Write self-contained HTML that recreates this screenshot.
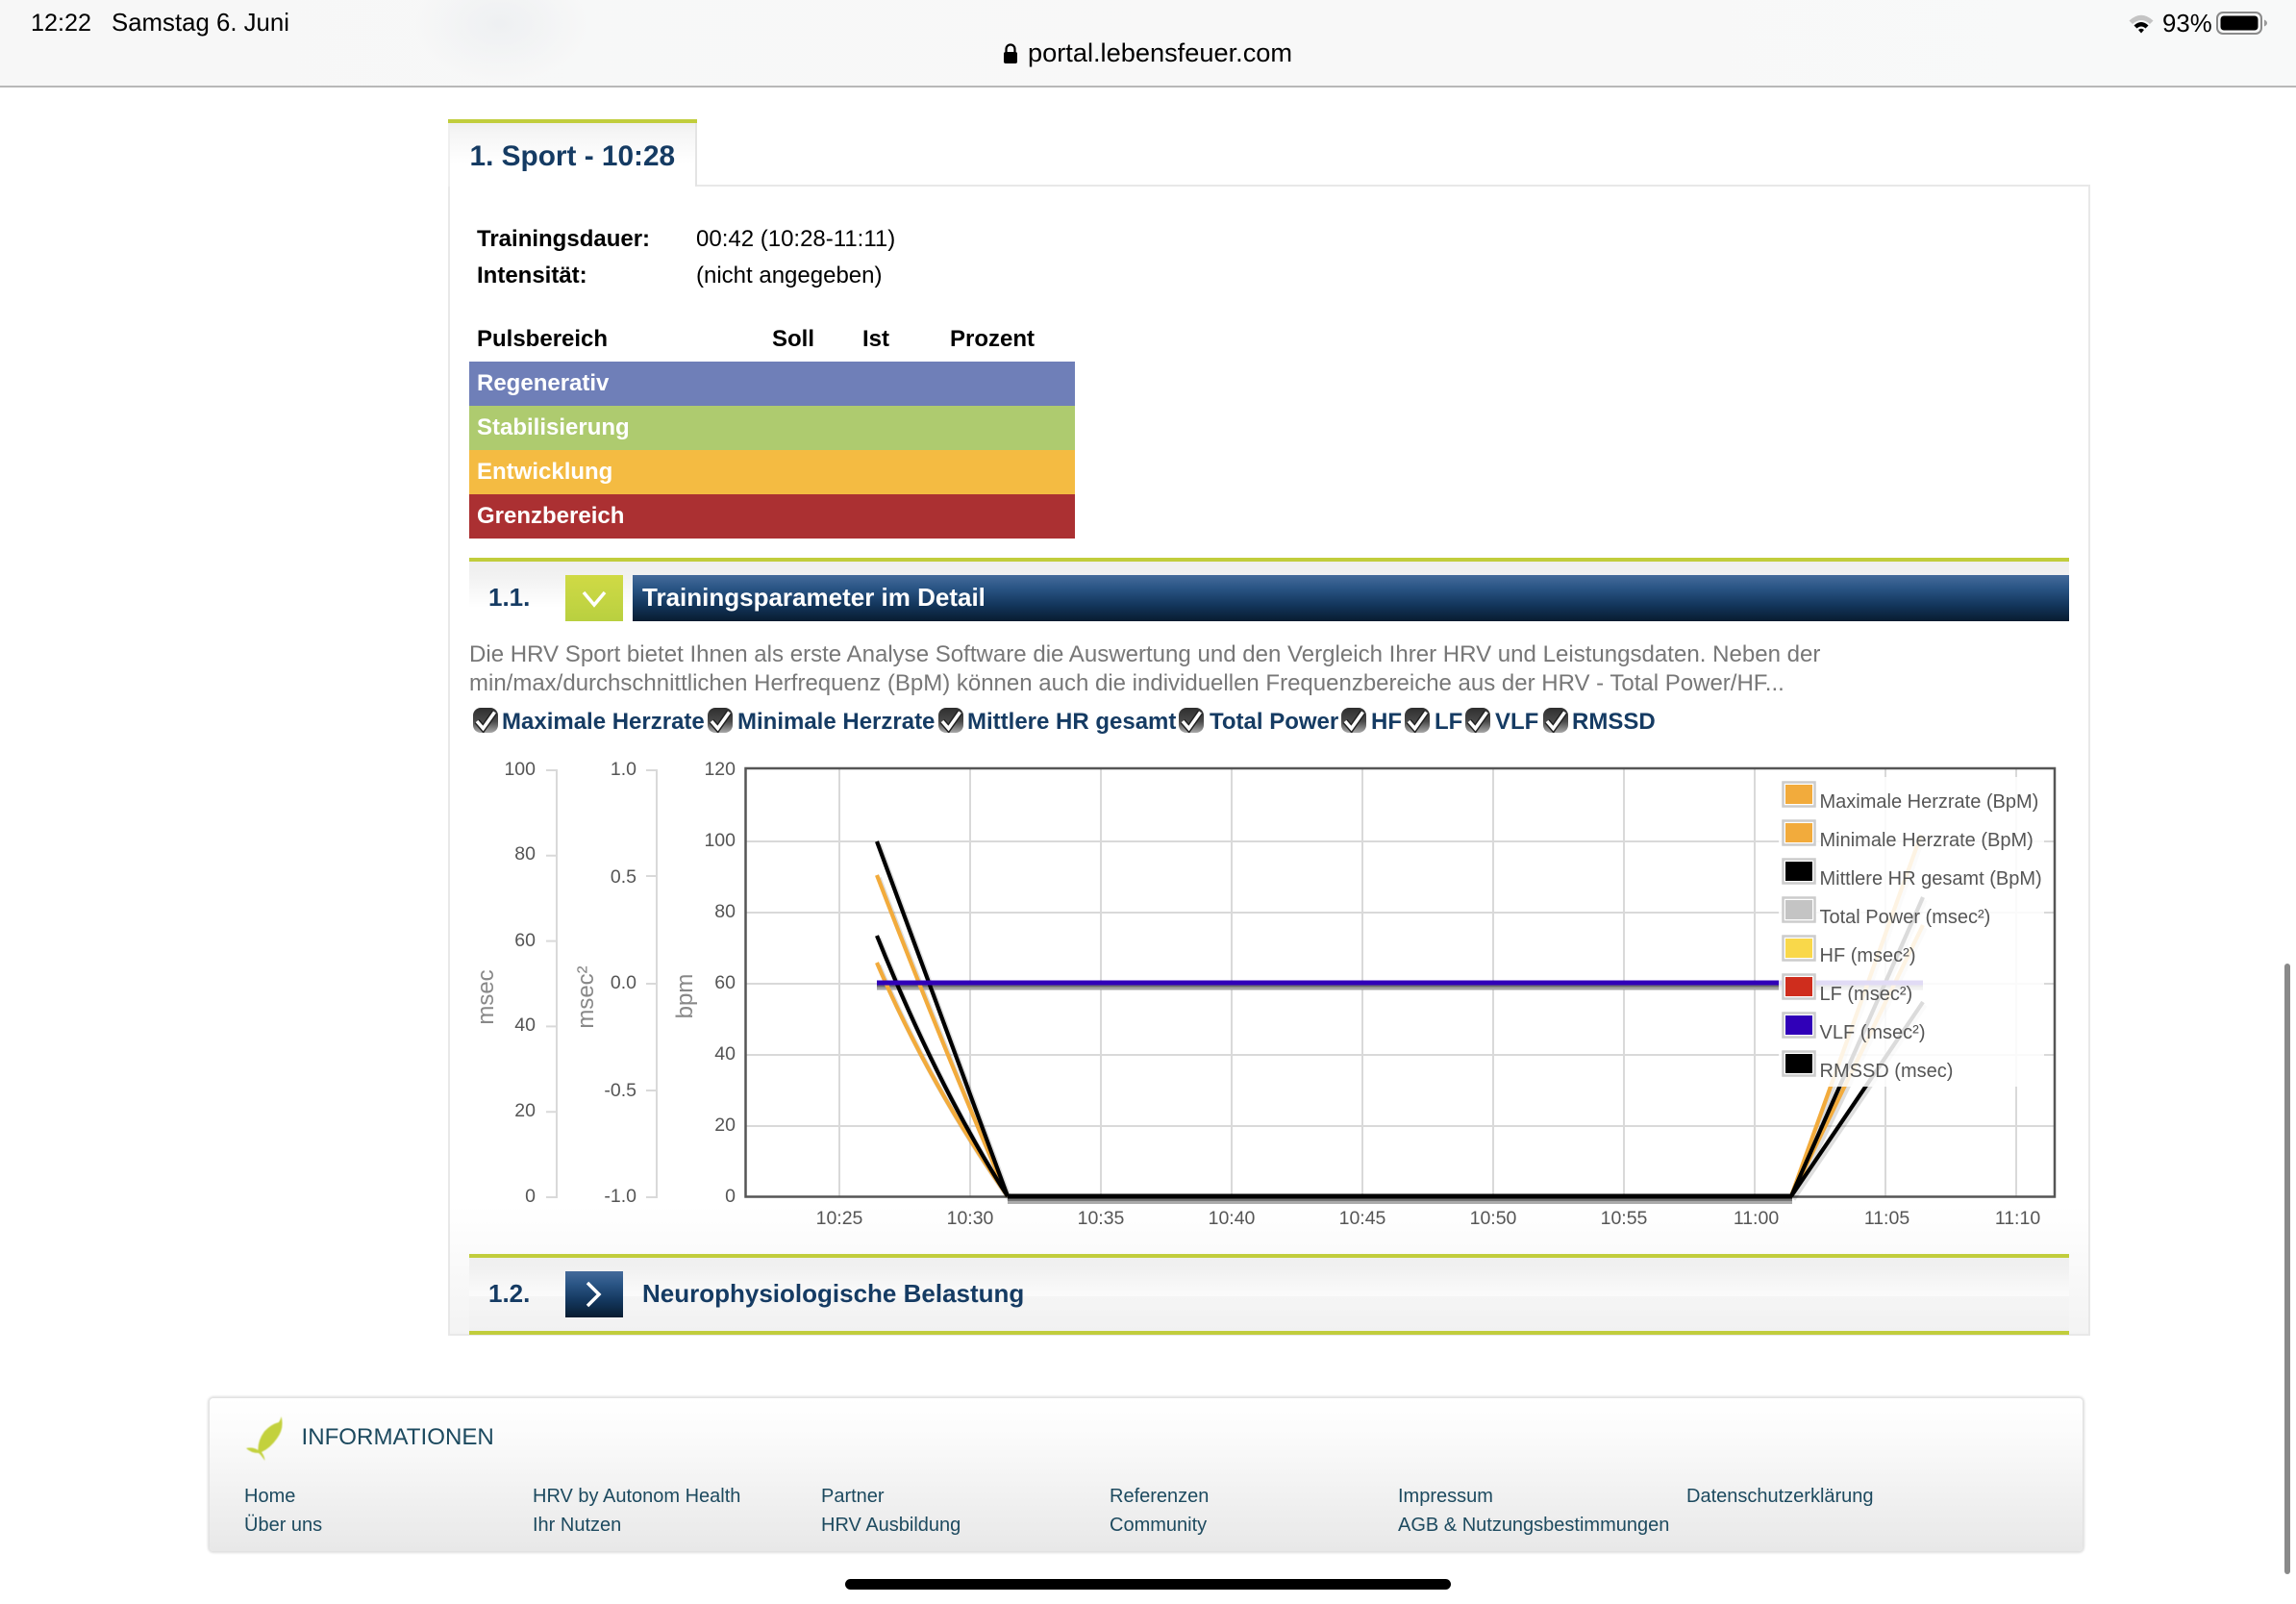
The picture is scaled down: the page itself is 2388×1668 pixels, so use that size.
<!DOCTYPE html>
<html lang="de"><head><meta charset="utf-8"><title>Lebensfeuer Portal</title>
<style>
html,body{margin:0;padding:0;background:#fff}
body{position:relative;width:2388px;height:1668px;overflow:hidden;font-family:"Liberation Sans",Arial,sans-serif;color:#000}
.a{position:absolute}
.t{position:absolute;white-space:nowrap;line-height:1}
.b{font-weight:bold}
.navy{color:#153b63}
.row{position:absolute;left:488px;width:630px;height:46px;color:#fff;font-weight:bold;font-size:24px;line-height:46px;text-indent:8px}
.f{font-size:20px;color:#1d4a5f}
.cb{position:absolute;top:736px;width:26px;height:26px}
.lbl{font-size:24px;top:739px;font-weight:bold;color:#153b63}
svg text{font-family:"Liberation Sans",Arial,sans-serif}
</style></head><body>
<svg width="0" height="0" style="position:absolute"><defs>
<linearGradient id="cg" x1="0" y1="0" x2="0" y2="1"><stop offset="0" stop-color="#2e2e2e"/><stop offset=".55" stop-color="#4a4a4a"/><stop offset="1" stop-color="#a8a8a8"/></linearGradient>
<symbol id="chk" viewBox="0 0 26 26"><rect x="0" y="0" width="26" height="26" rx="8" fill="url(#cg)"/><path d="M4 14L10.500 21.500L22.500 4.500" fill="none" stroke="#222" stroke-width="6.500"/><path d="M4 14L10.500 21.500L22.500 4.500" fill="none" stroke="#fff" stroke-width="3.500"/></symbol>
</defs></svg>

<!-- browser bar -->
<div class="a" style="left:0;top:0;width:2388px;height:89px;background:radial-gradient(ellipse 90px 60px at 520px 25px,#eef0f2 0%,rgba(238,240,242,0) 100%),linear-gradient(90deg,#f7f7f7,#f8f9f9)"></div>
<div class="a" style="left:0;top:89px;width:2388px;height:2px;background:#b8b8b8"></div>
<div class="t" style="left:32px;top:12px;font-size:25.2px">12:22</div>
<div class="t" style="left:116px;top:12px;font-size:25.8px">Samstag 6. Juni</div>
<svg class="a" style="left:1042px;top:44px" width="18" height="24" viewBox="0 0 18 24"><path d="M4.500 10V7a4.500 4.500 0 0 1 9 0V10" fill="none" stroke="#000" stroke-width="2.200"/><rect x="2" y="10" width="14" height="12" rx="2" fill="#000"/></svg>
<div class="t" style="left:1069px;top:41px;font-size:27.200px">portal.lebensfeuer.com</div>
<svg class="a" style="left:2212px;top:12px" width="30" height="24" viewBox="0 0 30 24"><path d="M2.500 9.500Q15 -2 27.500 9.500L24 13Q15 5 6 13Z" fill="#c4c4c4"/><path d="M7.500 14.500Q15 7.500 22.500 14.500L19.500 17.500Q15 13.500 10.500 17.500Z" fill="#000"/><path d="M12 19Q15 16.500 18 19L15 22.500Z" fill="#000"/></svg>
<div class="t" style="left:2249px;top:12.500px;font-size:25.800px">93%</div>
<svg class="a" style="left:2305px;top:12px" width="54" height="24" viewBox="0 0 54 24"><rect x="1" y="1" width="46" height="22" rx="6" fill="none" stroke="#8a8a8a" stroke-width="2"/><rect x="4.500" y="4.500" width="39" height="15" rx="3.500" fill="#000"/><path d="M50 8.500Q53 10 53 12T50 15.500Z" fill="#9a9a9a"/></svg>

<!-- scrollbar -->
<div class="a" style="left:2376px;top:1002px;width:6px;height:635px;background:#8a8a8a;border-radius:3px"></div>

<!-- panel -->
<div class="a" style="left:466px;top:192px;width:1708px;height:1197px;box-sizing:border-box;border:2px solid #e8e8e8;border-bottom-width:2px;background:linear-gradient(180deg,#fff 0,#fff 1060px,#f3f3f3 1195px)"></div>
<!-- tab -->
<div class="a" style="left:466px;top:124px;width:259px;height:70px;box-sizing:border-box;border-right:2px solid #e4e4e4;border-left:2px solid #efefef;background:linear-gradient(180deg,#ececec 0,#f5f5f5 14px,#fff 46px)"></div>
<div class="a" style="left:466px;top:124px;width:259px;height:4px;background:#c1cd3c"></div>
<div class="t b navy" style="left:488.500px;top:147.500px;font-size:29.800px">1. Sport - 10:28</div>

<div class="t b" style="left:496px;top:237px;font-size:24px">Trainingsdauer:</div>
<div class="t" style="left:724px;top:237px;font-size:24px">00:42 (10:28-11:11)</div>
<div class="t b" style="left:496px;top:275px;font-size:24px">Intensität:</div>
<div class="t" style="left:724px;top:275px;font-size:24px">(nicht angegeben)</div>
<div class="t b" style="left:496px;top:341px;font-size:24px">Pulsbereich</div>
<div class="t b" style="left:803px;top:341px;font-size:24px">Soll</div>
<div class="t b" style="left:897px;top:341px;font-size:24px">Ist</div>
<div class="t b" style="left:988px;top:341px;font-size:24px">Prozent</div>
<div class="row" style="top:376px;background:#6f7fb8">Regenerativ</div>
<div class="row" style="top:422px;background:#aecb6f">Stabilisierung</div>
<div class="row" style="top:468px;background:#f4bb42">Entwicklung</div>
<div class="row" style="top:514px;background:#ab3032">Grenzbereich</div>

<!-- section 1.1 -->
<div class="a" style="left:488px;top:580px;width:1664px;height:4px;background:#c1cd3c"></div>
<div class="a" style="left:488px;top:584px;width:1664px;height:48px;background:linear-gradient(180deg,#efefef 0,#f1f1f1 14px,#fff 100%)"></div>
<div class="t b navy" style="left:508px;top:608px;font-size:26px">1.1.</div>
<div class="a" style="left:588px;top:598px;width:60px;height:48px;background:linear-gradient(180deg,#d0da45,#b9d040)"></div>
<svg class="a" style="left:588px;top:598px" width="60" height="48"><path d="M19 18L30 31L41 18" fill="none" stroke="#fff" stroke-width="3.500"/></svg>
<div class="a" style="left:658px;top:598px;width:1494px;height:48px;background:linear-gradient(180deg,#456b9b 0,#2a5585 28%,#13365c 65%,#081c30 100%)"></div>
<div class="t b" style="left:668px;top:607.500px;font-size:26px;color:#fff">Trainingsparameter im Detail</div>

<div class="t" style="left:488px;top:668.500px;font-size:24.050px;color:#777">Die HRV Sport bietet Ihnen als erste Analyse Software die Auswertung und den Vergleich Ihrer HRV und Leistungsdaten. Neben der</div>
<div class="t" style="left:488px;top:698.500px;font-size:24px;color:#777">min/max/durchschnittlichen Herfrequenz (BpM) können auch die individuellen Frequenzbereiche aus der HRV - Total Power/HF...</div>

<svg class="cb" style="left:492px"><use href="#chk"/></svg><div class="t lbl" style="left:522px">Maximale Herzrate</div>
<svg class="cb" style="left:736px"><use href="#chk"/></svg><div class="t lbl" style="left:767px">Minimale Herzrate</div>
<svg class="cb" style="left:976px"><use href="#chk"/></svg><div class="t lbl" style="left:1006px">Mittlere HR gesamt</div>
<svg class="cb" style="left:1226px"><use href="#chk"/></svg><div class="t lbl" style="left:1258px">Total Power</div>
<svg class="cb" style="left:1395px"><use href="#chk"/></svg><div class="t lbl" style="left:1426px">HF</div>
<svg class="cb" style="left:1461px"><use href="#chk"/></svg><div class="t lbl" style="left:1492px">LF</div>
<svg class="cb" style="left:1524px"><use href="#chk"/></svg><div class="t lbl" style="left:1555px">VLF</div>
<svg class="cb" style="left:1605px"><use href="#chk"/></svg><div class="t lbl" style="left:1635px">RMSSD</div>

<!-- chart -->
<svg class="a" style="left:480px;top:780px" width="1680" height="510" viewBox="480 780 1680 510">
<g stroke="#d9d9d9" stroke-width="2" fill="none">
<path d="M776 875H2136M776 949H2136M776 1023H2136M776 1097H2136M776 1171H2136"/>
<path d="M873 800V1244M1009 800V1244M1145 800V1244M1281 800V1244M1417 800V1244M1553 800V1244M1689 800V1244M1825 800V1244M1961 800V1244M2097 800V1244"/>
<path d="M568 801H579V1245H568M568 889.800H579M568 978.600H579M568 1067.400H579M568 1156.200H579"/>
<path d="M672 801H683V1245H672M672 911H683M672 1023H683M672 1134H683"/>
</g>
<rect x="775.500" y="799" width="1361.500" height="445.500" fill="none" stroke="#555" stroke-width="2.500"/>
<g fill="none" stroke="#000" stroke-opacity=".13" stroke-width="5.500" transform="translate(2,3)">
<path d="M912 875L1048 1244M912 910Q985 1100 1048 1244M912 973Q975 1130 1048 1244M912 1001Q965 1125 1048 1244"/>
<path d="M1863 1244L1998 868M1863 1244L2000 933M1863 1244L2000 962M1863 1244L2000 1042"/>
</g>
<rect x="912" y="1024" width="1088" height="2.500" fill="#6f6f6f"/>
<rect x="912" y="1026.500" width="1088" height="3" fill="#a4a4a4"/>
<rect x="1048" y="1246" width="816" height="3" fill="#777"/>
<rect x="1048" y="1249" width="816" height="3" fill="#aaa"/>
<g fill="none" stroke-width="4.200">
<path d="M912 910Q985 1100 1048 1244" stroke="#f2ab3c"/>
<path d="M912 1001Q965 1125 1048 1244" stroke="#f2ab3c"/>
<path d="M1863 1244L1998 868" stroke="#f2ab3c"/>
<path d="M1863 1244L2000 962" stroke="#f2ab3c"/>
<path d="M912 875L1048 1244" stroke="#000"/>
<path d="M912 973Q975 1130 1048 1244" stroke="#000"/>
<path d="M1863 1244L2000 933" stroke="#000"/>
<path d="M1863 1244L2000 1042" stroke="#000"/>
</g>
<rect x="912" y="1019.500" width="1088" height="5" fill="#3000b8"/>
<rect x="1048" y="1241.500" width="816" height="5" fill="#000"/>
<rect x="1850" y="808" width="276" height="322" fill="#fff" fill-opacity=".86"/>
<g fill="#fff" stroke="#ccc" stroke-width="2.500">
<rect x="1854.500" y="813.500" width="33" height="25"/><rect x="1854.500" y="853.500" width="33" height="25"/><rect x="1854.500" y="893.500" width="33" height="25"/><rect x="1854.500" y="933.500" width="33" height="25"/><rect x="1854.500" y="973.500" width="33" height="25"/><rect x="1854.500" y="1013.500" width="33" height="25"/><rect x="1854.500" y="1053.500" width="33" height="25"/><rect x="1854.500" y="1093.500" width="33" height="25"/>
</g>
<rect x="1857" y="816" width="28" height="20" fill="#f2ab3c"/><rect x="1857" y="856" width="28" height="20" fill="#f2ab3c"/><rect x="1857" y="896" width="28" height="20" fill="#000"/><rect x="1857" y="936" width="28" height="20" fill="#c4c4c4"/><rect x="1857" y="976" width="28" height="20" fill="#f9d84a"/><rect x="1857" y="1016" width="28" height="20" fill="#cf2d1d"/><rect x="1857" y="1056" width="28" height="20" fill="#3000b8"/><rect x="1857" y="1096" width="28" height="20" fill="#000"/>
<g font-size="20" fill="#555">
<text x="1892.500" y="840">Maximale Herzrate (BpM)</text>
<text x="1892.500" y="880">Minimale Herzrate (BpM)</text>
<text x="1892.500" y="920">Mittlere HR gesamt (BpM)</text>
<text x="1892.500" y="960">Total Power (msec²)</text>
<text x="1892.500" y="1000">HF (msec²)</text>
<text x="1892.500" y="1040">LF (msec²)</text>
<text x="1892.500" y="1080">VLF (msec²)</text>
<text x="1892.500" y="1120">RMSSD (msec)</text>
</g>
<g font-size="19.500" fill="#555" text-anchor="end">
<text x="557" y="806">100</text><text x="557" y="894">80</text><text x="557" y="984">60</text><text x="557" y="1072">40</text><text x="557" y="1161">20</text><text x="557" y="1250">0</text>
<text x="662" y="806">1.0</text><text x="662" y="918">0.5</text><text x="662" y="1028">0.0</text><text x="662" y="1140">-0.5</text><text x="662" y="1250">-1.0</text>
<text x="765" y="806">120</text><text x="765" y="880">100</text><text x="765" y="954">80</text><text x="765" y="1028">60</text><text x="765" y="1102">40</text><text x="765" y="1176">20</text><text x="765" y="1250">0</text>
</g>
<g font-size="19.500" fill="#555" text-anchor="middle">
<text x="873" y="1273">10:25</text><text x="1009" y="1273">10:30</text><text x="1145" y="1273">10:35</text><text x="1281" y="1273">10:40</text><text x="1417" y="1273">10:45</text><text x="1553" y="1273">10:50</text><text x="1689" y="1273">10:55</text><text x="1826.500" y="1273">11:00</text><text x="1962.500" y="1273">11:05</text><text x="2098.500" y="1273">11:10</text>
</g>
<g font-size="24" fill="#888" text-anchor="middle">
<text transform="translate(513,1037) rotate(-90)">msec</text>
<text transform="translate(617,1037) rotate(-90)">msec²</text>
<text transform="translate(720,1036) rotate(-90)">bpm</text>
</g>
</svg>

<!-- section 1.2 -->
<div class="a" style="left:488px;top:1304px;width:1664px;height:4px;background:#c1cd3c"></div>
<div class="a" style="left:488px;top:1308px;width:1664px;height:40px;background:linear-gradient(180deg,#efefef 0,#f1f1f1 12px,#fbfbfb 100%)"></div>
<div class="a" style="left:488px;top:1348px;width:1664px;height:36px;background:linear-gradient(180deg,#f5f5f5,#f1f1f1)"></div>
<div class="a" style="left:488px;top:1384px;width:1664px;height:4px;background:#c1cd3c"></div>
<div class="t b navy" style="left:508px;top:1332px;font-size:26px">1.2.</div>
<div class="a" style="left:588px;top:1322px;width:60px;height:48px;background:linear-gradient(180deg,#456b9b 0,#2a5585 28%,#13365c 65%,#081c30 100%)"></div>
<svg class="a" style="left:588px;top:1322px" width="60" height="48"><path d="M23 12L35 24L23 36" fill="none" stroke="#fff" stroke-width="3.500"/></svg>
<div class="t b navy" style="left:668px;top:1331.500px;font-size:26px">Neurophysiologische Belastung</div>

<!-- footer -->
<div class="a" style="left:218px;top:1454px;width:1948px;height:159px;box-sizing:border-box;border-radius:4px;background:linear-gradient(180deg,#fff 0,#fbfbfb 25%,#f2f2f2 60%,#e8e8e8 100%);box-shadow:0 0 2px 2px #e0e0e0"></div>
<svg class="a" style="left:250px;top:1465px;filter:blur(.4px)" width="60" height="60" viewBox="0 0 60 60"><path d="M42.500 8Q46 20 38 31Q31 41 22 45Q25 49 25.500 54Q21.500 48 19 46Q11 46 6 41Q13 39.500 18.500 43Q18 33 25 23.500Q32 16 40 14Q42 11 42.500 8Z" fill="#c3d13d"/></svg>
<div class="t" style="left:313.500px;top:1482.500px;font-size:24.100px;color:#1d4a5f">INFORMATIONEN</div>
<div class="t f" style="left:254px;top:1545.500px">Home</div><div class="t f" style="left:254px;top:1576px">Über uns</div>
<div class="t f" style="left:554px;top:1545.500px">HRV by Autonom Health</div><div class="t f" style="left:554px;top:1576px">Ihr Nutzen</div>
<div class="t f" style="left:854px;top:1545.500px">Partner</div><div class="t f" style="left:854px;top:1576px">HRV Ausbildung</div>
<div class="t f" style="left:1154px;top:1545.500px">Referenzen</div><div class="t f" style="left:1154px;top:1576px">Community</div>
<div class="t f" style="left:1454px;top:1545.500px">Impressum</div><div class="t f" style="left:1454px;top:1576px">AGB &amp; Nutzungsbestimmungen</div>
<div class="t f" style="left:1754px;top:1545.500px">Datenschutzerklärung</div>

<div class="a" style="left:879px;top:1642px;width:630px;height:11px;background:#000;border-radius:6px"></div>
</body></html>
